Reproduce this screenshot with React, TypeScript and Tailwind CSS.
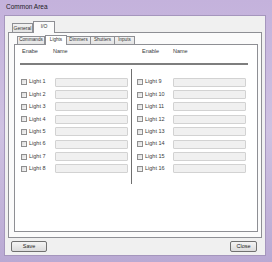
import React from "react";

const leftLights = ["Light 1", "Light 2", "Light 3", "Light 4", "Light 5", "Light 6", "Light 7", "Light 8"];
const rightLights = ["Light 9", "Light 10", "Light 11", "Light 12", "Light 13", "Light 14", "Light 15", "Light 16"];

function Row({ label, labelW }: { label: string; labelW: string }) {
  return (
    <div className="flex h-[12.4px] items-center">
      <div className="h-[6px] w-[6px] border border-[#8f8f8f] bg-gradient-to-br from-[#dcdcdc] to-[#f6f6f6]" />
      <div className={`ml-[2px] ${labelW} text-[#3a3a3a]`}>{label}</div>
      <div className="h-[9px] w-[73px] rounded-[1px] border border-[#d2d2d2] bg-[#f0f0f0]" />
    </div>
  );
}

export default function App() {
  return (
    <div
      className="flex h-[262px] w-[272px] flex-col bg-gradient-to-b from-[#c4b2dc] via-[#cfc2e2] to-[#b9a9d3] text-[5.5px] leading-none"
      style={{ fontFamily: '"Liberation Sans", Arial, sans-serif' }}
    >
      <div className="flex h-[15px] items-center pl-[6px] text-[6.5px] text-[#1c1c1c]">Common Area</div>
      <div className="ml-[4px] mr-[6px] mb-[6px] flex flex-1 flex-col border border-[#a596bd] bg-[#f0f0f0]">
        {/* outer tabs */}
        <div className="flex h-[16px] items-end pl-[7px] text-[5px]">
          <div className="flex h-[9px] w-[21px] items-center justify-center border border-b-0 border-[#8e8f94] bg-gradient-to-b from-[#f2f2f2] to-[#e3e3e3] text-[#333]">
            General
          </div>
          <div className="relative -mb-px flex h-[12px] w-[22px] items-start justify-center border border-b-0 border-[#8e8f94] bg-[#fbfbfb] pt-[2px] text-[#333]">
            I/O
          </div>
        </div>
        {/* outer panel */}
        <div className="mx-[3px] flex h-[206px] flex-col border border-[#8e8f94] bg-[#fbfbfb]">
          <div className="flex h-[11px] items-end pl-[8px] text-[4.6px]">
            <div className="flex h-[8px] w-[28px] items-center justify-center border border-b-0 border-[#8e8f94] bg-gradient-to-b from-[#f2f2f2] to-[#e3e3e3] text-[#333]">
              Commands
            </div>
            <div className="relative -mb-px flex h-[10px] w-[22px] items-start justify-center border border-b-0 border-[#8e8f94] bg-white pt-[1.5px] text-[#333]">
              Lights
            </div>
            <div className="flex h-[8px] w-[24px] items-center justify-center border border-b-0 border-l-0 border-[#8e8f94] bg-gradient-to-b from-[#f2f2f2] to-[#e3e3e3] text-[#333]">
              Dimmers
            </div>
            <div className="flex h-[8px] w-[24px] items-center justify-center border border-b-0 border-l-0 border-[#8e8f94] bg-gradient-to-b from-[#f2f2f2] to-[#e3e3e3] text-[#333]">
              Shutters
            </div>
            <div className="flex h-[8px] w-[20px] items-center justify-center border border-b-0 border-l-0 border-[#8e8f94] bg-gradient-to-b from-[#f2f2f2] to-[#e3e3e3] text-[#333]">
              Inputs
            </div>
          </div>
          {/* inner panel */}
          <div className="ml-[5px] mr-[3px] mb-[5px] flex flex-1 flex-col border border-[#8e8f94] bg-white">
            <div className="flex h-[8px] items-center pl-[7px] mt-[3px] text-[#3a3a3a]">
              <div className="w-[31px]">Enabe</div>
              <div className="w-[89px]">Name</div>
              <div className="w-[31px]">Enable</div>
              <div>Name</div>
            </div>
            <div className="ml-[5px] mt-[7px] h-[2px] w-[228px] bg-[#7e7e7e]" />
            <div className="flex items-start pl-[6px]">
              <div className="flex flex-col pt-[11px]">
                {leftLights.map((l) => (
                  <Row key={l} label={l} labelW="w-[26px]" />
                ))}
              </div>
              <div className="ml-[3px] mt-[4px] h-[115px] w-px bg-[#6f6f6f]" />
              <div className="ml-[5px] flex flex-col pt-[11px]">
                {rightLights.map((l) => (
                  <Row key={l} label={l} labelW="w-[28px]" />
                ))}
              </div>
            </div>
          </div>
        </div>
        {/* buttons */}
        <div className="flex flex-1 items-center justify-between pl-[6px] pr-[8px]">
          <button className="flex h-[11px] w-[36px] items-center justify-center rounded-[2px] border border-[#707070] bg-gradient-to-b from-[#f4f4f4] to-[#dcdcdc] text-[#222]">
            Save
          </button>
          <button className="flex h-[11px] w-[27px] items-center justify-center rounded-[2px] border border-[#707070] bg-gradient-to-b from-[#f4f4f4] to-[#dcdcdc] text-[#222]">
            Close
          </button>
        </div>
      </div>
    </div>
  );
}
